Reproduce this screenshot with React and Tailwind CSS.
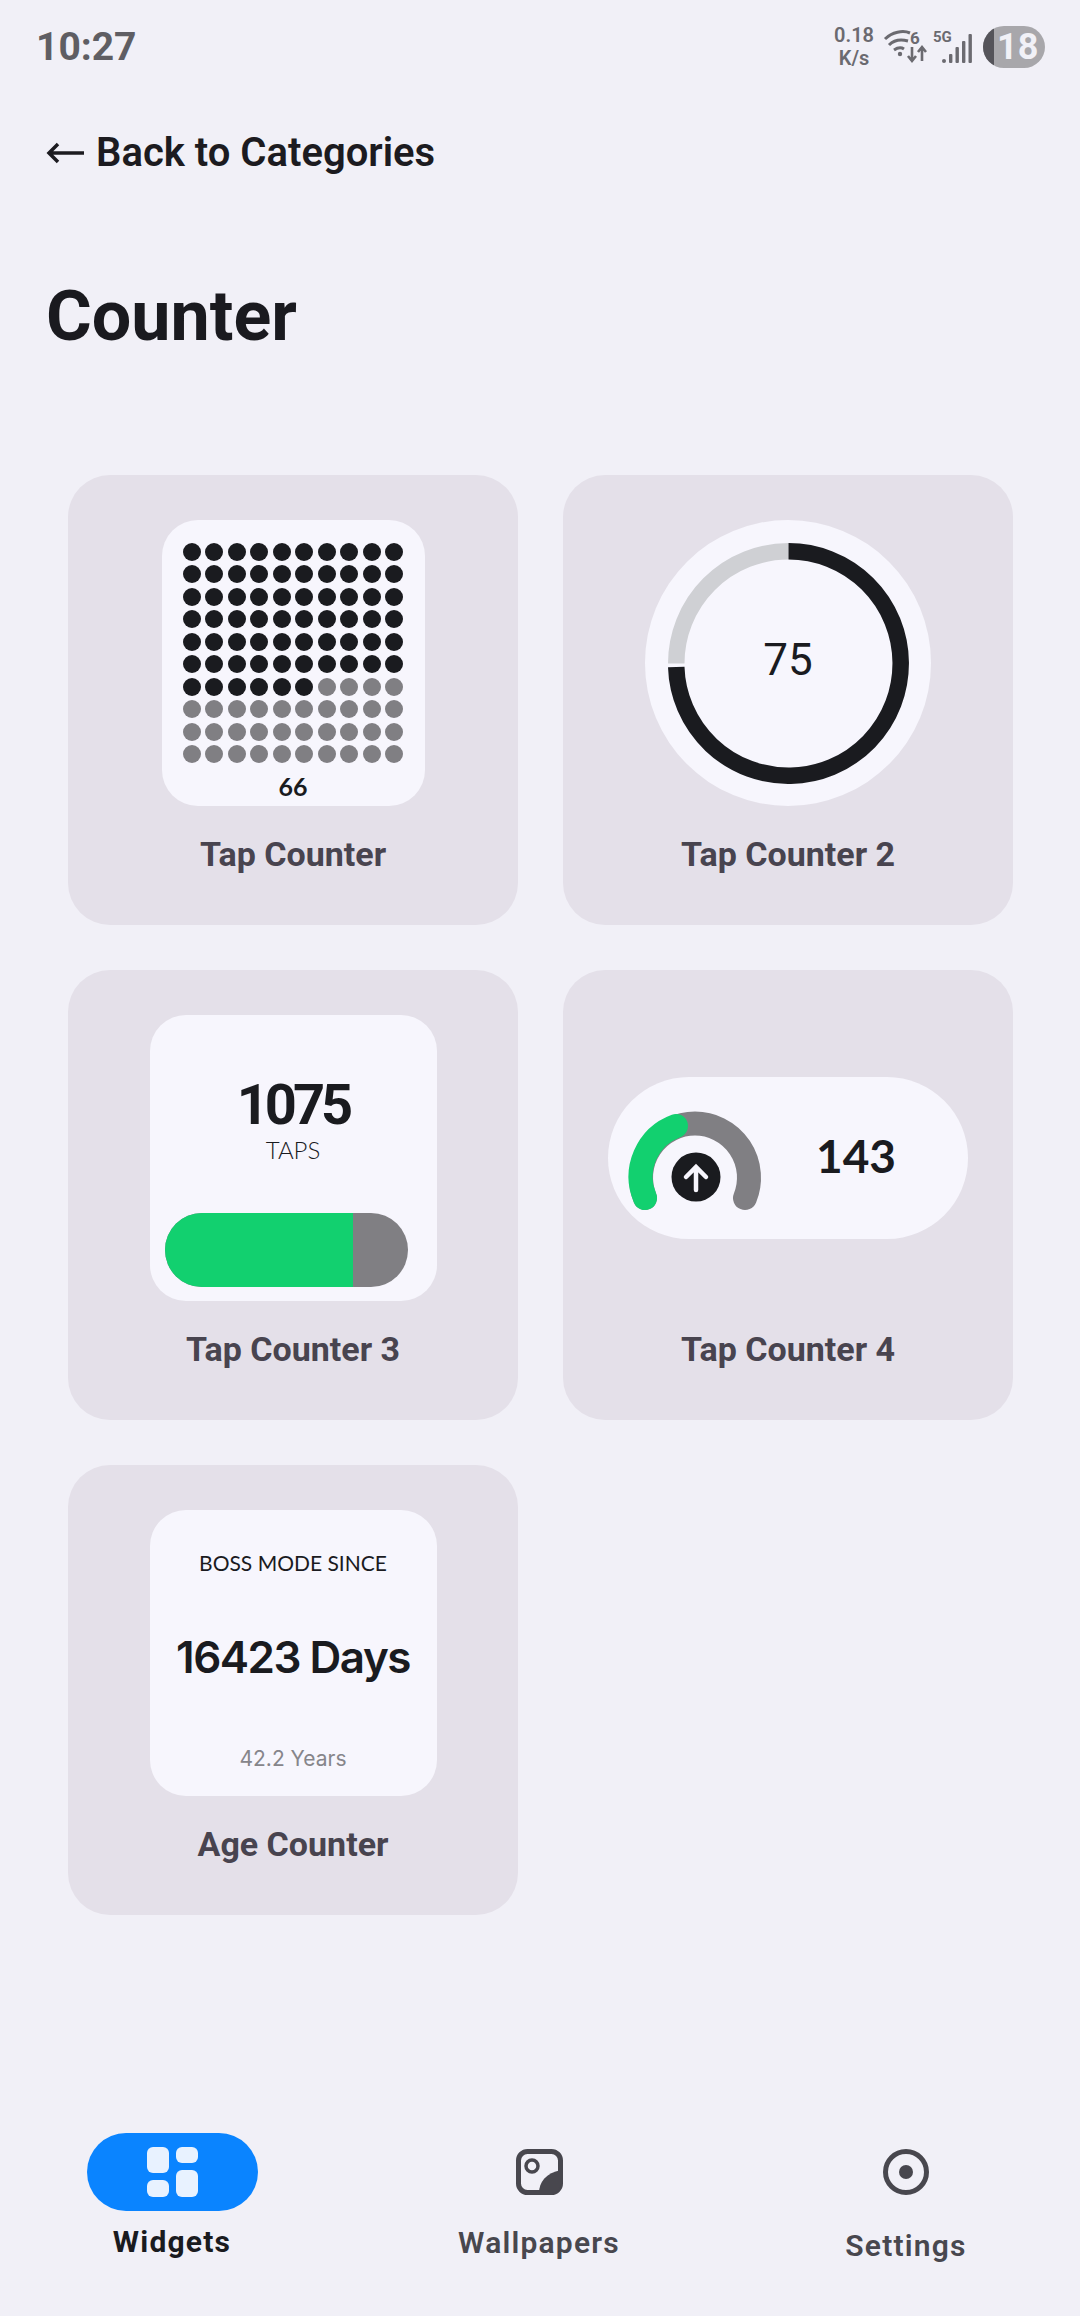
const DOTS = Array.from({ length: 100 }, (_, i) => i);

function StatusBar() {
  return (
    <div className="h-[133px] pt-[26px] pl-[36px] pr-[35px] flex justify-between items-start text-[#6b6a70]">
      <span className="text-[39px] leading-[42px] font-bold text-[#5f5e63]">10:27</span>
      <div className="flex items-center h-[42px]">
        <div className="w-[42px] flex flex-col items-center text-[20px] leading-[23px] font-semibold">
          <span>0.18</span>
          <span>K/s</span>
        </div>
        <svg width="44" height="38" viewBox="0 0 44 38" className="ml-[8px]" fill="none" stroke="#6b6a70">
          <path d="M2 11 C9 4 20 2 27 5" strokeWidth="3" />
          <path d="M6 17 C11 12 18 11 25 13" strokeWidth="3" />
          <path d="M11 22 C14 20 18 19 21 21" strokeWidth="3" />
          <circle cx="17" cy="26" r="2.2" fill="#6b6a70" stroke="none" />
          <text x="27" y="16" fontSize="17" fontWeight="700" fill="#6b6a70" stroke="none">6</text>
          <path d="M29 19 V32 M25 28 L29 33 L33 28" strokeWidth="2.6" />
          <path d="M39 33 V20 M35 24 L39 19 L43 24" strokeWidth="2.6" />
        </svg>
        <svg width="42" height="38" viewBox="0 0 42 38" className="ml-[6px]" fill="#6b6a70">
          <text x="0" y="14" fontSize="15" fontWeight="700">5G</text>
          <circle cx="11" cy="33" r="2" />
          <rect x="16" y="26" width="3.4" height="9" rx="1" />
          <rect x="22.5" y="19" width="3.4" height="16" rx="1" />
          <rect x="29" y="13" width="3.4" height="22" rx="1" />
          <rect x="35.5" y="6" width="3.4" height="29" rx="1" />
        </svg>
        <div className="ml-[8px] w-[62px] h-[42px] rounded-full overflow-hidden bg-[#a8a7ab] flex items-center">
          <div className="w-[11px] h-full bg-[#55545a] shrink-0" />
          <span className="ml-[3px] text-[36px] leading-none font-bold text-[#f1f1f7]">18</span>
        </div>
      </div>
    </div>
  );
}

function Card({ label, children }) {
  return (
    <div className="w-[450px] h-[450px] rounded-[42px] bg-[#e4e0e9] pt-[45px] flex flex-col items-center">
      <div className="h-[286px] flex items-center justify-center">{children}</div>
      <div className="mt-[28px] text-[34px] leading-[40px] font-bold text-[#48444f]">{label}</div>
    </div>
  );
}

function DotTile() {
  return (
    <div className="w-[263px] h-[286px] rounded-[36px] bg-[#f7f6fd] pt-[23px] flex flex-col items-center">
      <div className="grid grid-cols-10 gap-[4.45px] w-[220px]">
        {DOTS.map((i) => (
          <div key={i} className={i < 66 ? 'w-[18px] h-[18px] rounded-full bg-[#1a1b1f]' : 'w-[18px] h-[18px] rounded-full bg-[#807f83]'} />
        ))}
      </div>
      <span className="mt-[11px] font-[Lato,sans-serif] text-[25px] leading-[24px] font-bold text-[#1a1b1f]">66</span>
    </div>
  );
}

function RingTile() {
  return (
    <div className="relative w-[286px] h-[286px] rounded-full bg-[#f7f6fd] flex items-center justify-center">
      <svg width="241" height="241" viewBox="0 0 241 241" fill="none" strokeWidth="16.5">
        <path d="M120.5 8.25 A112.25 112.25 0 0 0 8.25 120.5" stroke="#cfd0d4" />
        <path d="M120.5 8.25 A112.25 112.25 0 1 1 8.25 124" stroke="#1a1b1f" />
      </svg>
      <span className="absolute inset-0 flex items-center justify-center pb-[6px] text-[44px] text-[#1a1b1f]">75</span>
    </div>
  );
}

function BarTile() {
  return (
    <div className="w-[287px] h-[286px] rounded-[36px] bg-[#f7f6fd] pt-[62px] pb-[14px] flex flex-col items-center">
      <span className="text-[56px] leading-[56px] font-bold tracking-[-4px] text-[#1a1b1f]">1075</span>
      <span className="mt-[3px] font-[Lato,sans-serif] text-[24px] leading-[28px] font-light text-[#1a1b1f]">TAPS</span>
      <div className="mt-auto self-start ml-[15px] w-[243px] h-[74px] rounded-full overflow-hidden flex bg-[#807f83]">
        <div className="w-[188px] h-full bg-[#12d06f]" />
      </div>
    </div>
  );
}

function GaugeTile() {
  return (
    <div className="w-[360px] h-[162px] rounded-full bg-[#f7f6fd] flex items-center">
      <svg width="150" height="120" viewBox="0 0 150 120" className="ml-[13px] mt-[6px]" fill="none" strokeLinecap="round">
        <path d="M24 97 A54 54 0 1 1 124 97" stroke="#807f83" strokeWidth="24" />
        <path d="M24 97 A54 54 0 0 1 55 25" stroke="#12d06f" strokeWidth="24" />
        <circle cx="75" cy="76" r="24.5" fill="#1a1b1f" />
        <path d="M75 89 V66 M65 76 L75 66 L85 76" stroke="#f7f6fd" strokeWidth="4.5" />
      </svg>
      <span className="ml-[45px] mb-[4px] font-[Lato,sans-serif] text-[46px] leading-none font-bold text-[#1a1b1f]">143</span>
    </div>
  );
}

function AgeTile() {
  return (
    <div className="w-[287px] h-[286px] rounded-[36px] bg-[#f7f6fd] pt-[39px] flex flex-col items-center">
      <span className="font-[Lato,sans-serif] text-[21px] leading-[28px] text-[#1a1b1f]">BOSS MODE SINCE</span>
      <span className="mt-[52px] font-[Inter,sans-serif] text-[44px] leading-[56px] font-semibold tracking-[-1.5px] text-[#1a1b1f]">16423 Days</span>
      <span className="mt-[60px] font-[Inter,sans-serif] text-[21px] leading-[28px] text-[#86858a]">42.2 Years</span>
    </div>
  );
}

function BottomNav() {
  return (
    <div className="mt-[218px] pl-[52px] flex gap-[127px]">
      <div className="w-[240px] flex flex-col items-center">
        <div className="w-[171px] h-[78px] rounded-full bg-[#0a84ff] flex items-center justify-center">
          <svg width="51" height="50" viewBox="0 0 51 50" fill="#e8f2ff">
            <rect x="0" y="0" width="22" height="26" rx="6" />
            <rect x="29" y="0" width="22" height="16" rx="6" />
            <rect x="0" y="33" width="22" height="17" rx="6" />
            <rect x="29" y="23" width="22" height="27" rx="6" />
          </svg>
        </div>
        <span className="mt-[13px] text-[30px] leading-[36px] font-bold tracking-[1.2px] text-[#1a1b1f]">Widgets</span>
      </div>
      <div className="w-[240px] flex flex-col items-center">
        <div className="h-[78px] flex items-center">
          <svg width="47" height="46" viewBox="0 0 47 46" fill="none">
            <rect x="2.5" y="2.5" width="42" height="41" rx="9" stroke="#48474e" strokeWidth="5" />
            <circle cx="16" cy="17" r="6" stroke="#48474e" strokeWidth="3.5" />
            <path d="M23 44 C23 33 30 24 45 21 V35 A9 9 0 0 1 36 44 Z" fill="#48474e" />
          </svg>
        </div>
        <span className="mt-[14px] text-[30px] leading-[36px] font-semibold tracking-[1.2px] text-[#48474e]">Wallpapers</span>
      </div>
      <div className="w-[240px] flex flex-col items-center">
        <div className="h-[78px] flex items-center">
          <svg width="46" height="46" viewBox="0 0 46 46" fill="none">
            <circle cx="23" cy="23" r="20.5" stroke="#48474e" strokeWidth="5" />
            <circle cx="23" cy="23" r="7" fill="#48474e" />
          </svg>
        </div>
        <span className="mt-[17px] text-[30px] leading-[36px] font-semibold tracking-[1.2px] text-[#48474e]">Settings</span>
      </div>
    </div>
  );
}

export default function App() {
  return (
    <div className="w-[1080px] h-[2316px] overflow-hidden bg-[#f1f0f7] font-[Roboto,sans-serif]">
      <StatusBar />

      <div className="pl-[46px] flex items-center h-[40px] text-[#1c1b20]">
        <svg width="38" height="22" viewBox="0 0 38 22" fill="none" stroke="#1c1b20" strokeWidth="3.5">
          <path d="M38 11 H3 M12 2 L3 11 L12 20" />
        </svg>
        <span className="ml-[12px] text-[40px] leading-[40px] font-semibold">Back to Categories</span>
      </div>

      <h1 className="mt-[103px] pl-[46px] text-[70px] leading-[80px] font-bold text-[#1a1a1f]">Counter</h1>

      {/* widget cards */}
      <div className="mt-[119px] pl-[68px] grid grid-cols-[450px_450px] gap-[45px]">
        <Card label="Tap Counter"><DotTile /></Card>
        <Card label="Tap Counter 2"><RingTile /></Card>
        <Card label="Tap Counter 3"><BarTile /></Card>
        <Card label="Tap Counter 4"><GaugeTile /></Card>
        <Card label="Age Counter"><AgeTile /></Card>
      </div>

      <BottomNav />
    </div>
  );
}
